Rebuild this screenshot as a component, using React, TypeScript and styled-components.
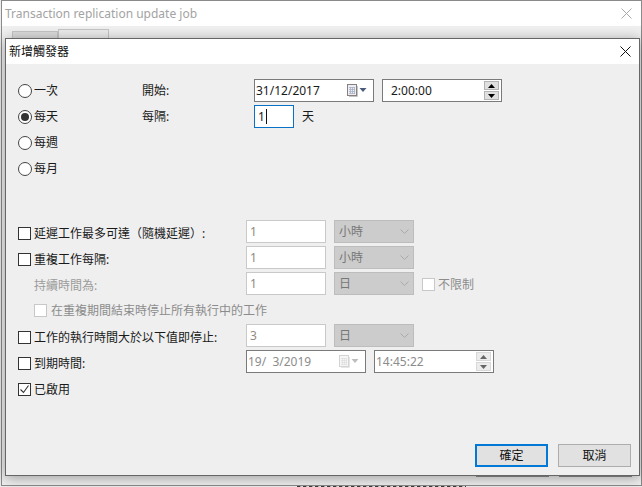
import React from "react";
import styled, { createGlobalStyle } from "styled-components";

const Global = createGlobalStyle`
  html, body { margin: 0; padding: 0; width: 642px; height: 487px; overflow: hidden; background: #f0f0f0; }
  #root { width: 642px; height: 487px; }
  * { box-sizing: border-box; }
`;

const Desktop = styled.div`
  position: relative;
  width: 642px;
  height: 487px;
  overflow: hidden;
  font: 12px/16px "Noto Sans", "Noto Sans CJK TC", sans-serif;
  color: #1a1a1a;
  background: #ededed;
`;

const PageText = styled.div<{ $bottom?: boolean; $from: number; $to: number }>`
  position: absolute;
  left: ${(p) => p.$from}px;
  width: ${(p) => p.$to - p.$from}px;
  ${(p) => (p.$bottom ? "bottom: 0;" : "top: 0;")}
  height: 1px;
  background: repeating-linear-gradient(90deg, #3c3c3c 0 3px, #b0a8a0 3px 4px, #e6e6e6 4px 6px);
`;

const OuterWindow = styled.div`
  position: absolute;
  left: 1px;
  top: 1px;
  width: 641px;
  height: 485px;
  border: 1px solid #8a8a8a;
  border-width: 0 1px 1px 1px;
  box-shadow: 0 -1px 0 #8a8a8a;
  background: #f0f0f0;
`;

const OuterTitle = styled.div`
  display: flex;
  align-items: center;
  justify-content: space-between;
  height: 25px;
  padding: 0 9px 0 3px;
  background: #fff;
  color: #a3a3a3;
`;

const Tabs = styled.div`
  display: flex;
  align-items: flex-end;
  height: 12px;
  padding-left: 10px;
`;

const Tab = styled.div<{ $active?: boolean }>`
  width: ${(p) => (p.$active ? 51 : 46)}px;
  height: ${(p) => (p.$active ? 9 : 7)}px;
  border: 1px solid #c4c4c4;
  border-bottom: 0;
  background: ${(p) => (p.$active ? "#ececec" : "#dcdcdc")};
`;

const OuterFooter = styled.div`
  position: absolute;
  right: 9px;
  bottom: 8px;
  display: flex;
  gap: 10px;
`;

const OuterButton = styled.div`
  width: 73px;
  height: 8px;
  background: #8c8c8c;
`;

const Dialog = styled.div`
  position: absolute;
  left: 5px;
  top: 38px;
  width: 635px;
  height: 438px;
  display: flex;
  flex-direction: column;
  border: 1px solid #666;
  background: #efefef;
  box-shadow: 0 2px 13px rgba(0, 0, 0, 0.36);
`;

const TitleBar = styled.div`
  flex: none;
  display: flex;
  align-items: center;
  justify-content: space-between;
  height: 25px;
  padding: 0 8px 0 3px;
  background: #fff;
  color: #111;
`;

const Body = styled.div`
  flex: 1;
  display: flex;
  flex-direction: column;
  padding: 15px 8px 8px 12px;
`;

const Schedule = styled.div`
  display: grid;
  grid-template-columns: 124px 112px 120px 8px 120px;
  grid-template-rows: repeat(4, 26px);
  height: 141px;
`;

const Cell = styled.div<{ $col: number; $row: number; $span?: number }>`
  grid-column: ${(p) => p.$col} / span ${(p) => p.$span ?? 1};
  grid-row: ${(p) => p.$row};
  display: flex;
  align-items: flex-start;
  gap: 8px;
`;

const Choice = styled.div<{ $dim?: boolean; $indent?: number; $drop?: number; $gap?: number }>`
  display: flex;
  align-items: center;
  gap: ${(p) => p.$gap ?? 3}px;
  height: ${(p) => 23 + (p.$drop ?? 0)}px;
  padding-top: ${(p) => p.$drop ?? 0}px;
  padding-left: ${(p) => p.$indent ?? 0}px;
  color: ${(p) => (p.$dim ? "#9b9b9b" : "#1a1a1a")};
  white-space: nowrap;
`;

const Radio = styled.span<{ $on?: boolean }>`
  display: flex;
  align-items: center;
  justify-content: center;
  width: 14px;
  height: 14px;
  border: 1px solid #444;
  border-radius: 50%;
  background: #fff;
  &::after {
    content: "";
    display: ${(p) => (p.$on ? "block" : "none")};
    width: 8px;
    height: 8px;
    border-radius: 50%;
    background: #333;
  }
`;

const Box = styled.span<{ $dim?: boolean }>`
  flex: none;
  display: flex;
  align-items: center;
  justify-content: center;
  width: 13px;
  height: 13px;
  border: 1px solid ${(p) => (p.$dim ? "#c8c8c8" : "#333")};
  background: #fff;
`;

const Field = styled.div<{ $w: number; $dim?: boolean; $focus?: boolean; $pad?: number }>`
  flex: none;
  display: flex;
  align-items: center;
  justify-content: space-between;
  width: ${(p) => p.$w}px;
  height: 23px;
  padding: 0 2px 0 ${(p) => p.$pad ?? 1}px;
  background: #fff;
  border: 1px solid ${(p) => (p.$focus ? "#0a70c8" : p.$dim ? "#c9c9c9" : "#7a7a7a")};
  color: ${(p) => (p.$dim ? "#928a80" : "#1a1a1a")};
`;

const Muted = styled.span`
  color: #8c8c8c;
`;

const Caret = styled.span`
  display: inline-block;
  width: 1px;
  height: 15px;
  margin-left: 1px;
  background: #111;
`;

const Value = styled.span`
  display: flex;
  align-items: center;
`;

const Select = styled.div`
  flex: none;
  display: flex;
  align-items: center;
  justify-content: space-between;
  width: 80px;
  height: 23px;
  padding: 0 4px 0 4px;
  background: #cccccc;
  border: 1px solid #bdbdbd;
  color: #777;
`;

const Spinner = styled.div`
  display: flex;
  flex-direction: column;
  gap: 1px;
`;

const SpinButton = styled.div<{ $dim?: boolean }>`
  display: flex;
  align-items: center;
  justify-content: center;
  width: 15px;
  height: 9px;
  background: ${(p) => (p.$dim ? "#ececec" : "#e0e0e0")};
  border: 1px solid ${(p) => (p.$dim ? "#d8d8d8" : "#b4b4b4")};
`;

const Options = styled.div`
  display: grid;
  grid-template-columns: 228px 88px 88px auto;
  grid-auto-rows: 26px;
`;

const Wide = styled.div`
  grid-column: 1 / -1;
`;

const DateTime = styled.div`
  grid-column: 2 / -1;
  display: flex;
  gap: 8px;
`;

const Footer = styled.div`
  margin-top: auto;
  display: flex;
  justify-content: flex-end;
  gap: 10px;
`;

const Button = styled.div<{ $primary?: boolean }>`
  display: flex;
  align-items: center;
  justify-content: center;
  width: 73px;
  height: 23px;
  background: #e1e1e1;
  border: ${(p) => (p.$primary ? "2px solid #0078d7" : "1px solid #adadad")};
  color: #111;
`;

const CalendarSvg = styled.svg`
  flex: none;
  margin-right: 4px;
`;

const Close = ({ color }: { color: string }) => (
  <svg width="11" height="11" viewBox="0 0 11 11">
    <path d="M.5.5l10 10M10.5.5l-10 10" stroke={color} strokeWidth="1" fill="none" />
  </svg>
);

const Tick = () => (
  <svg width="11" height="11" viewBox="0 0 11 11">
    <path d="M1.5 5.5l3 3 5-7" stroke="#333" strokeWidth="1.1" fill="none" />
  </svg>
);

const Chevron = () => (
  <svg width="9" height="5" viewBox="0 0 9 5">
    <path d="M.5.5l4 4 4-4" stroke="#aaa" strokeWidth="1" fill="none" />
  </svg>
);

const Arrow = ({ up, color }: { up?: boolean; color: string }) => (
  <svg width="7" height="4" viewBox="0 0 7 4">
    <path d={up ? "M3.5 0l3.5 4H0z" : "M0 0h7L3.5 4z"} fill={color} />
  </svg>
);

const Calendar = ({ dim }: { dim?: boolean }) => (
  <CalendarSvg width="20" height="13" viewBox="0 0 20 13">
    <path d="M2 12.5h8.5V2" stroke={dim ? "#e6e6e6" : "#c4c4c4"} strokeWidth="1" fill="none" />
    <rect x=".5" y=".5" width="9" height="11" fill={dim ? "#f6f6f6" : "#eceef2"} stroke={dim ? "#d4d4d4" : "#8a7f7f"} />
    <path d="M2 3.5h6M2 5.5h6M2 7.5h6M2 9.5h6M3.5 3v7M5.5 3v7M7.5 3v7" stroke={dim ? "#e0e0e0" : "#a8b0c4"} strokeWidth=".8" />
    <path d="M12.5 4h7L16 8z" fill={dim ? "#bdbdbd" : "#4a5a7a"} />
  </CalendarSvg>
);

const Spin = ({ dim }: { dim?: boolean }) => (
  <Spinner>
    <SpinButton $dim={dim}><Arrow up color={dim ? "#666" : "#000"} /></SpinButton>
    <SpinButton $dim={dim}><Arrow color={dim ? "#666" : "#000"} /></SpinButton>
  </Spinner>
);

const Check = ({ on, children }: { on?: boolean; children: React.ReactNode }) => (
  <Choice $drop={2}>
    <Box>{on && <Tick />}</Box>
    {children}
  </Choice>
);

const Unit = ({ children }: { children: string }) => (
  <Select>
    {children}
    <Chevron />
  </Select>
);

const Num = ({ children }: { children: string }) => (
  <Field $w={80} $dim $pad={3}>{children}</Field>
);

export default function App() {
  return (
    <Desktop>
      <Global />
      <PageText $from={30} $to={40} />
      <PageText $from={78} $to={112} />
      <PageText $from={349} $to={384} />
      <PageText $from={425} $to={445} />
      <PageText $from={490} $to={510} />
      <PageText $from={560} $to={580} />
      <PageText $from={610} $to={630} />
      <PageText $bottom $from={297} $to={466} />
      <OuterWindow>
        <OuterTitle>
          Transaction replication update job
          <Close color="#a8a8a8" />
        </OuterTitle>
        <Tabs>
          <Tab />
          <Tab $active />
        </Tabs>
        <OuterFooter>
          <OuterButton />
          <OuterButton />
        </OuterFooter>
      </OuterWindow>
      <Dialog>
        <TitleBar>
          新增觸發器
          <Close color="#111" />
        </TitleBar>
        <Body>
          <Schedule>
            <Cell $col={1} $row={1}><Choice $gap={2}><Radio />一次</Choice></Cell>
            <Cell $col={2} $row={1}><Choice>開始:</Choice></Cell>
            <Cell $col={3} $row={1}>
              <Field $w={120}>
                31/12/2017
                <Calendar />
              </Field>
            </Cell>
            <Cell $col={5} $row={1}>
              <Field $w={120} $pad={8}>
                2:00:00
                <Spin />
              </Field>
            </Cell>
            <Cell $col={1} $row={2}><Choice $gap={2}><Radio $on />每天</Choice></Cell>
            <Cell $col={2} $row={2}><Choice>每隔:</Choice></Cell>
            <Cell $col={3} $row={2} $span={3}>
              <Field $w={40} $focus $pad={3}>
                <Value>1<Caret /></Value>
              </Field>
              <Choice>天</Choice>
            </Cell>
            <Cell $col={1} $row={3}><Choice $gap={2}><Radio />每週</Choice></Cell>
            <Cell $col={1} $row={4}><Choice $gap={2}><Radio />每月</Choice></Cell>
          </Schedule>
          <Options>
            <Check>延遲工作最多可達（隨機延遲）:</Check>
            <Num>1</Num>
            <Unit>小時</Unit>
            <span />
            <Check>重複工作每隔:</Check>
            <Num>1</Num>
            <Unit>小時</Unit>
            <span />
            <Choice $dim $indent={16} $drop={2}>持續時間為:</Choice>
            <Num>1</Num>
            <Unit>日</Unit>
            <Choice $dim $drop={1}>
              <Box $dim />
              <Muted>不限制</Muted>
            </Choice>
            <Wide>
              <Choice $dim $indent={16} $drop={1} $gap={4}>
                <Box $dim />
                <Muted>在重複期間結束時停止所有執行中的工作</Muted>
              </Choice>
            </Wide>
            <Check>工作的執行時間大於以下值即停止:</Check>
            <Num>3</Num>
            <Unit>日</Unit>
            <span />
            <Check>到期時間:</Check>
            <DateTime>
              <Field $w={120} $pad={1}>
                <Muted>{"19/\u00a0\u00a03/2019"}</Muted>
                <Calendar dim />
              </Field>
              <Field $w={120} $pad={1}>
                <Muted>14:45:22</Muted>
                <Spin dim />
              </Field>
            </DateTime>
            <Wide><Check on>已啟用</Check></Wide>
          </Options>
          <Footer>
            <Button $primary>確定</Button>
            <Button>取消</Button>
          </Footer>
        </Body>
      </Dialog>
    </Desktop>
  );
}
